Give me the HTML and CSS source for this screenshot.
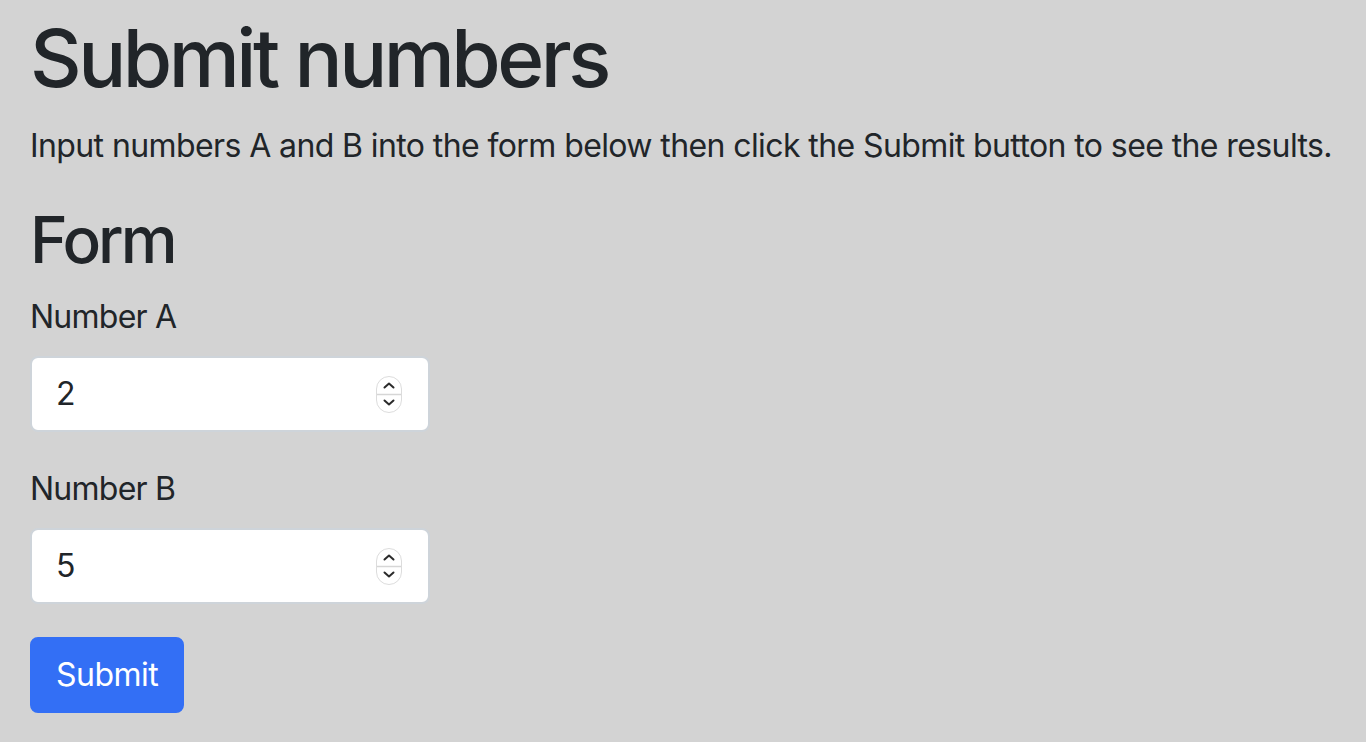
FILE: index.html
```html
<!DOCTYPE html>
<html lang="en">
<head>
<meta charset="utf-8">
<title>Submit numbers</title>
<link rel="stylesheet" href="styles.css">
</head>
<body>
<main class="container">
  <h1 class="title">Submit numbers</h1>
  <p class="lead-text">Input numbers A and B into the form below then click the Submit button to see the results.</p>
  <h2 class="subtitle">Form</h2>
  <form class="form">
    <div class="field">
      <label class="field-label" for="a">Number A</label>
      <div class="input-wrap">
        <input class="field-input" id="a" type="number" value="2">
        <svg class="spinner" width="26" height="37" viewBox="0 0 26 37" aria-hidden="true">
          <rect x="0.5" y="0.5" width="25" height="36" rx="12.5" fill="#fff" stroke="#dcdcdc"/>
          <line x1="1" y1="18.5" x2="25" y2="18.5" stroke="#d6d6d6" stroke-width="1.5"/>
          <path d="M8.5 11.5 L13 7.5 L17.5 11.5" fill="none" stroke="#2b2b2b" stroke-width="2" stroke-linecap="round" stroke-linejoin="round"/>
          <path d="M8.5 24.5 L13 28.5 L17.5 24.5" fill="none" stroke="#2b2b2b" stroke-width="2" stroke-linecap="round" stroke-linejoin="round"/>
        </svg>
      </div>
    </div>
    <div class="field">
      <label class="field-label" for="b">Number B</label>
      <div class="input-wrap">
        <input class="field-input" id="b" type="number" value="5">
        <svg class="spinner" width="26" height="37" viewBox="0 0 26 37" aria-hidden="true">
          <rect x="0.5" y="0.5" width="25" height="36" rx="12.5" fill="#fff" stroke="#dcdcdc"/>
          <line x1="1" y1="18.5" x2="25" y2="18.5" stroke="#d6d6d6" stroke-width="1.5"/>
          <path d="M8.5 11.5 L13 7.5 L17.5 11.5" fill="none" stroke="#2b2b2b" stroke-width="2" stroke-linecap="round" stroke-linejoin="round"/>
          <path d="M8.5 24.5 L13 28.5 L17.5 24.5" fill="none" stroke="#2b2b2b" stroke-width="2" stroke-linecap="round" stroke-linejoin="round"/>
        </svg>
      </div>
    </div>
    <button class="btn-primary" type="submit">Submit</button>
  </form>
</main>
</body>
</html>
```

FILE: styles.css
```css
html, body {
  margin: 0;
  padding: 0;
}

body {
  background: #d3d3d3;
  color: #212529;
  font-family: Inter, "Noto Sans", "Liberation Sans", sans-serif;
  font-size: 32px;
  line-height: 1.5;
  letter-spacing: -0.5px;
}

.container {
  padding: 10px 30px 30px;
}

.title {
  font-size: 80px;
  font-weight: 500;
  line-height: 1.2;
  margin: 0 0 16px;
  letter-spacing: -3.5px;
}

.lead-text {
  margin: 0 0 32px;
  white-space: nowrap;
  letter-spacing: -0.6px;
}

.subtitle {
  font-size: 64px;
  font-weight: 500;
  line-height: 1.2;
  margin: 0 0 14px;
  letter-spacing: -3px;
}

.form {
  display: flex;
  flex-direction: column;
  align-items: flex-start;
}

.field {
  display: flex;
  flex-direction: column;
  margin-bottom: 33px;
}

.field-label {
  display: block;
  margin-bottom: 15px;
  letter-spacing: -0.75px;
}

.input-wrap {
  position: relative;
  width: 400px;
}

.field-input {
  box-sizing: border-box;
  display: block;
  width: 400px;
  height: 76px;
  padding: 12px 24px;
  font: inherit;
  color: #212529;
  background: #fff;
  border: 2px solid #ced4da;
  border-radius: 8px;
  outline: none;
  -moz-appearance: textfield;
}

.field-input::-webkit-inner-spin-button,
.field-input::-webkit-outer-spin-button {
  -webkit-appearance: none;
  margin: 0;
}

.spinner {
  position: absolute;
  left: 346px;
  top: 20px;
}

.btn-primary {
  box-sizing: border-box;
  height: 76px;
  padding: 12px 24px;
  font: inherit;
  letter-spacing: -0.5px;
  color: #fff;
  background: #336ff5;
  border: 2px solid #336ff5;
  border-radius: 8px;
  cursor: pointer;
}
```
